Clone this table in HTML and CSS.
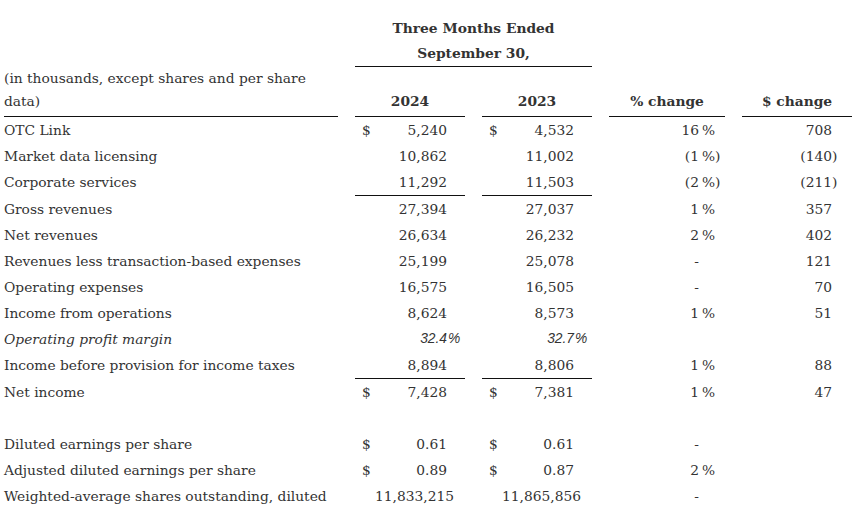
FILE: index.html
```html
<!DOCTYPE html>
<html>
<head>
<meta charset="utf-8">
<link rel="stylesheet" href="styles.css">
</head>
<body>
<div class="table">
  <div class="row head1"><div class="span2 c b">Three Months Ended</div></div>
  <div class="row head2"><div class="span2 c b rule">September 30,</div></div>
  <div class="row head3">
    <div class="label rule">(in thousands, except shares and per share data)</div>
    <div class="gh rule">2024</div>
    <div class="gh rule">2023</div>
    <div class="gh rule">% change</div>
    <div class="gh rule">$ change</div>
  </div>

  <div class="row">
    <div class="label">OTC Link</div>
    <div class="grp"><span class="cur">$</span><span class="val">5,240</span><span class="suf"></span></div>
    <div class="grp"><span class="cur">$</span><span class="val">4,532</span><span class="suf"></span></div>
    <div class="grp pct"><span class="cur"></span><span class="val">16</span><span class="suf">%</span></div>
    <div class="grp dol"><span class="cur"></span><span class="val">708</span><span class="suf"></span></div>
  </div>
  <div class="row">
    <div class="label">Market data licensing</div>
    <div class="grp"><span class="cur"></span><span class="val">10,862</span><span class="suf"></span></div>
    <div class="grp"><span class="cur"></span><span class="val">11,002</span><span class="suf"></span></div>
    <div class="grp pct"><span class="cur"></span><span class="val">(1</span><span class="suf">%)</span></div>
    <div class="grp dol"><span class="cur"></span><span class="val">(140</span><span class="suf">)</span></div>
  </div>
  <div class="row">
    <div class="label">Corporate services</div>
    <div class="grp rule"><span class="cur"></span><span class="val">11,292</span><span class="suf"></span></div>
    <div class="grp rule"><span class="cur"></span><span class="val">11,503</span><span class="suf"></span></div>
    <div class="grp pct"><span class="cur"></span><span class="val">(2</span><span class="suf">%)</span></div>
    <div class="grp dol"><span class="cur"></span><span class="val">(211</span><span class="suf">)</span></div>
  </div>
  <div class="row">
    <div class="label">Gross revenues</div>
    <div class="grp"><span class="cur"></span><span class="val">27,394</span><span class="suf"></span></div>
    <div class="grp"><span class="cur"></span><span class="val">27,037</span><span class="suf"></span></div>
    <div class="grp pct"><span class="cur"></span><span class="val">1</span><span class="suf">%</span></div>
    <div class="grp dol"><span class="cur"></span><span class="val">357</span><span class="suf"></span></div>
  </div>
  <div class="row">
    <div class="label">Net revenues</div>
    <div class="grp"><span class="cur"></span><span class="val">26,634</span><span class="suf"></span></div>
    <div class="grp"><span class="cur"></span><span class="val">26,232</span><span class="suf"></span></div>
    <div class="grp pct"><span class="cur"></span><span class="val">2</span><span class="suf">%</span></div>
    <div class="grp dol"><span class="cur"></span><span class="val">402</span><span class="suf"></span></div>
  </div>
  <div class="row">
    <div class="label">Revenues less transaction-based expenses</div>
    <div class="grp"><span class="cur"></span><span class="val">25,199</span><span class="suf"></span></div>
    <div class="grp"><span class="cur"></span><span class="val">25,078</span><span class="suf"></span></div>
    <div class="grp pct"><span class="cur"></span><span class="val dash">-</span><span class="suf"></span></div>
    <div class="grp dol"><span class="cur"></span><span class="val">121</span><span class="suf"></span></div>
  </div>
  <div class="row">
    <div class="label">Operating expenses</div>
    <div class="grp"><span class="cur"></span><span class="val">16,575</span><span class="suf"></span></div>
    <div class="grp"><span class="cur"></span><span class="val">16,505</span><span class="suf"></span></div>
    <div class="grp pct"><span class="cur"></span><span class="val dash">-</span><span class="suf"></span></div>
    <div class="grp dol"><span class="cur"></span><span class="val">70</span><span class="suf"></span></div>
  </div>
  <div class="row">
    <div class="label">Income from operations</div>
    <div class="grp"><span class="cur"></span><span class="val">8,624</span><span class="suf"></span></div>
    <div class="grp"><span class="cur"></span><span class="val">8,573</span><span class="suf"></span></div>
    <div class="grp pct"><span class="cur"></span><span class="val">1</span><span class="suf">%</span></div>
    <div class="grp dol"><span class="cur"></span><span class="val">51</span><span class="suf"></span></div>
  </div>
  <div class="row">
    <div class="label i">Operating profit margin</div>
    <div class="grp it"><span class="cur"></span><span class="val">32.4</span><span class="suf">%</span></div>
    <div class="grp it"><span class="cur"></span><span class="val">32.7</span><span class="suf">%</span></div>
    <div class="grp pct"></div>
    <div class="grp dol"></div>
  </div>
  <div class="row">
    <div class="label">Income before provision for income taxes</div>
    <div class="grp rule"><span class="cur"></span><span class="val">8,894</span><span class="suf"></span></div>
    <div class="grp rule"><span class="cur"></span><span class="val">8,806</span><span class="suf"></span></div>
    <div class="grp pct"><span class="cur"></span><span class="val">1</span><span class="suf">%</span></div>
    <div class="grp dol"><span class="cur"></span><span class="val">88</span><span class="suf"></span></div>
  </div>
  <div class="row">
    <div class="label">Net income</div>
    <div class="grp"><span class="cur">$</span><span class="val">7,428</span><span class="suf"></span></div>
    <div class="grp"><span class="cur">$</span><span class="val">7,381</span><span class="suf"></span></div>
    <div class="grp pct"><span class="cur"></span><span class="val">1</span><span class="suf">%</span></div>
    <div class="grp dol"><span class="cur"></span><span class="val">47</span><span class="suf"></span></div>
  </div>
  <div class="row blank"></div>
  <div class="row">
    <div class="label">Diluted earnings per share</div>
    <div class="grp"><span class="cur">$</span><span class="val">0.61</span><span class="suf"></span></div>
    <div class="grp"><span class="cur">$</span><span class="val">0.61</span><span class="suf"></span></div>
    <div class="grp pct"><span class="cur"></span><span class="val dash">-</span><span class="suf"></span></div>
    <div class="grp dol"></div>
  </div>
  <div class="row">
    <div class="label">Adjusted diluted earnings per share</div>
    <div class="grp"><span class="cur">$</span><span class="val">0.89</span><span class="suf"></span></div>
    <div class="grp"><span class="cur">$</span><span class="val">0.87</span><span class="suf"></span></div>
    <div class="grp pct"><span class="cur"></span><span class="val">2</span><span class="suf">%</span></div>
    <div class="grp dol"></div>
  </div>
  <div class="row">
    <div class="label">Weighted-average shares outstanding, diluted</div>
    <div class="grp"><span class="cur"></span><span class="val">11,833,215</span><span class="suf"></span></div>
    <div class="grp"><span class="cur"></span><span class="val">11,865,856</span><span class="suf"></span></div>
    <div class="grp pct"><span class="cur"></span><span class="val dash">-</span><span class="suf"></span></div>
    <div class="grp dol"></div>
  </div>
</div>
</body>
</html>
```

FILE: styles.css
```css
html, body {
  margin: 0;
  padding: 0;
  background: #fff;
}
body {
  font-family: "DejaVu Serif", "Liberation Serif", serif;
  font-size: 13.8px;
  color: #333;
}
.table {
  padding: 16px 0 0 4px;
}
.row {
  display: grid;
  grid-template-columns: 334px 110px 110px 116px 110px;
  column-gap: 17px;
}
.row > div {
  padding: 2px 0 2px;
  line-height: 22px;
  min-height: 22px;
}
.head1 > div, .head2 > div {
  padding: 1px 0;
  line-height: 23px;
}
.span2 {
  grid-column: 2 / 4;
}
.c { text-align: center; }
.b { font-weight: bold; }
.rule {
  border-bottom: 1px solid #111;
}
.head3 {
  align-items: end;
}
.head3 > div {
  padding: 0 0 3px;
  line-height: 23px;
}
.gh {
  text-align: center;
  font-weight: bold;
}
.grp {
  display: grid;
  grid-template-columns: 20px 1fr 18px;
}
.grp .cur {
  padding-left: 7px;
}
.grp .val {
  text-align: right;
}
.grp .suf {
  padding-left: 1px;
  white-space: nowrap;
}
.pct {
  grid-template-columns: 20px 1fr 26px;
}
.pct .suf {
  padding-left: 3px;
}
.dol {
  grid-template-columns: 20px 1fr 20px;
}
.dol .suf {
  padding-left: 0;
}
.it {
  font-family: "Liberation Sans", "DejaVu Sans", sans-serif;
  font-style: italic;
}
.i { font-style: italic; }
.row.blank {
  height: 26px;
}
```
